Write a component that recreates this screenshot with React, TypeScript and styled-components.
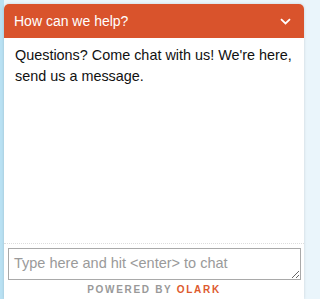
import styled, { createGlobalStyle } from "styled-components";

const GlobalStyle = createGlobalStyle`
  html, body {
    margin: 0;
    padding: 0;
    height: 299px;
    overflow: hidden;
    background: linear-gradient(to right, #b9e1f3 0, #b9e1f3 4px, #eaf5fb 4px);
    font-family: "Liberation Sans", Arial, sans-serif;
  }
`;

const Page = styled.div`
  padding: 4px 6px 0 4px;
  height: 299px;
  box-sizing: border-box;
`;

const ChatBox = styled.section`
  width: 300px;
  height: 100%;
  background: #fff;
  border-radius: 5px 5px 0 0;
  box-shadow: 0 0 3px rgba(0, 0, 0, 0.15);
  display: flex;
  flex-direction: column;
`;

const Header = styled.header`
  height: 34px;
  background: #d9532c;
  border-radius: 5px 5px 0 0;
  display: flex;
  align-items: center;
  justify-content: space-between;
  padding: 0 13px 0 10px;
  color: #fff;
  font-size: 14px;
`;

const Welcome = styled.div`
  height: 206px;
  box-sizing: border-box;
  padding: 7px 11px 5px;
  font-size: 14.4px;
  line-height: 21px;
  color: #111;
  border-bottom: 1px dotted #ddd;
`;

const Input = styled.textarea`
  margin: 4px 3px 0 4px;
  height: 32px;
  box-sizing: border-box;
  border: 1px solid #a9a9a9;
  padding: 6px 5px;
  font-family: "Liberation Sans", Arial, sans-serif;
  font-size: 14.5px;
  line-height: 16px;
  resize: vertical;
  outline: none;
  &::placeholder {
    color: #9a9a9a;
  }
`;

const Footer = styled.div`
  text-align: center;
  font-size: 10px;
  font-weight: bold;
  letter-spacing: 1.7px;
  color: #999;
  padding-top: 4px;
`;

const Brand = styled.span`
  color: #dd5a2e;
`;

const Chevron = () => (
  <svg width="11" height="7" viewBox="0 0 11 7" aria-hidden>
    <path d="M1 1.2l4.5 4.3L10 1.2" fill="none" stroke="#fff" strokeWidth="1.8" />
  </svg>
);

export default function App() {
  return (
    <>
      <GlobalStyle />
      <Page>
        <ChatBox>
          <Header>
            <span>How can we help?</span>
            <Chevron />
          </Header>
          <Welcome>Questions? Come chat with us! We're here, send us a message.</Welcome>
          <Input placeholder="Type here and hit <enter> to chat" />
          <Footer>
            POWERED BY <Brand>OLARK</Brand>
          </Footer>
        </ChatBox>
      </Page>
    </>
  );
}
